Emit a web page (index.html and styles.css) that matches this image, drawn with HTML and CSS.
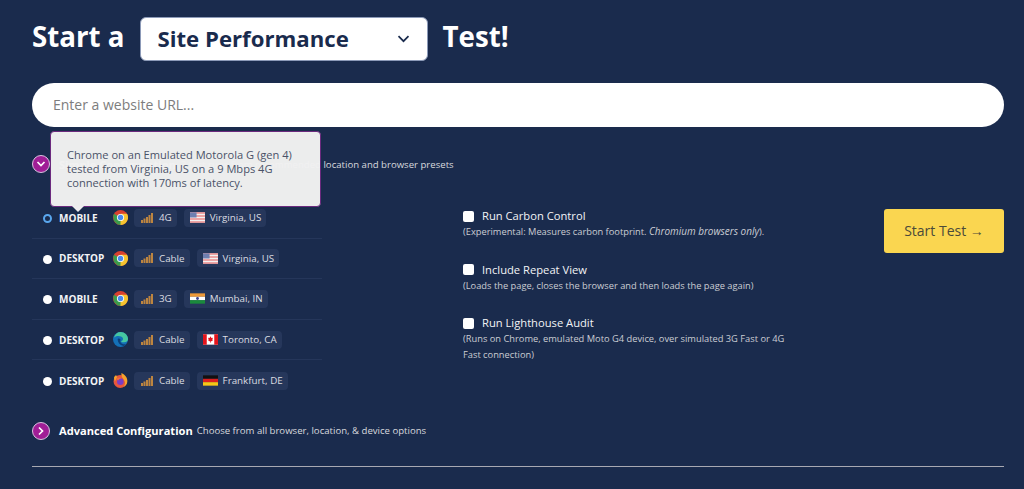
FILE: index.html
```html
<!DOCTYPE html>
<html lang="en">
<head>
<meta charset="utf-8">
<title>Start a Test</title>
<link rel="stylesheet" href="styles.css">
</head>
<body>
<svg class="defs" width="0" height="0" aria-hidden="true">
  <symbol id="bars" viewBox="0 0 12 10">
    <path d="M0 7h2v3H0zM2.500 5.500h2V10h-2zM5 4h2v6H5zM7.500 2h2v8h-2zM10 0h2v10h-2z" fill="#bd8540"/>
  </symbol>
  <symbol id="chrome" viewBox="0 0 16 16">
    <circle cx="8" cy="8" r="8" fill="#d9402f"/>
    <path d="M8 8 1.070 4 .3 6 1 11.500 4.500 15.200 8 16l3-4z" fill="#3b9c4b"/>
    <path d="M8 8v8a8 8 0 0 0 6.930-12H8z" fill="#f6c430"/>
    <circle cx="8" cy="8" r="3.800" fill="#fff"/>
    <circle cx="8" cy="8" r="2.900" fill="#4a8bee"/>
  </symbol>
  <symbol id="edge" viewBox="0 0 16 16">
    <circle cx="8" cy="8" r="8" fill="#1470b8"/>
    <path d="M1 6c1-4 4-6 7-6 4.500 0 8 3.500 8 7.500 0 2.500-2 3.500-4 3.500-1.500 0-3-.5-3.500-1 2-.5 2.500-2 2-3.500C9.500 4 3.500 3 1 6z" fill="#46c6a0"/>
    <path d="M5 8c0 3 2 6 6 7 1-.4 2-1 3-2-2 .5-5 0-6-2-.5-1 0-2 0-3-1-1.500-3-1.500-3 0z" fill="#0c3f78"/>
  </symbol>
  <symbol id="firefox" viewBox="0 0 16 16">
    <circle cx="7.600" cy="9" r="7" fill="#e8563c"/>
    <path d="M9 0c4 2 6.500 5 6.300 9-.2 3-2 5-4.300 6 2-2 2.500-5 1-7C11 6 8.500 4 9 0z" fill="#f6a32c"/>
    <path d="M1 5c.6-1.500 1.500-2.500 2.500-3 0 1 .5 1.700 1 2L2 9z" fill="#f6a32c"/>
    <circle cx="7.800" cy="9.200" r="3.500" fill="#7a3ec4"/>
    <path d="M3.500 6.500C5 5 7 4.800 9 5.500 7.500 6 6 6.500 5.500 8z" fill="#f2703a"/>
  </symbol>
  <symbol id="us" viewBox="0 0 16 11">
    <rect width="16" height="11" fill="#f3f0f0"/>
    <path d="M0 0h16v1.600H0zM0 3.100h16v1.600H0zM0 6.300h16v1.600H0zM0 9.400h16V11H0z" fill="#ea8a8c"/>
    <rect width="7" height="5.500" fill="#6f7fb0"/>
  </symbol>
  <symbol id="in" viewBox="0 0 16 11">
    <rect width="16" height="3.700" fill="#ef9a38"/>
    <rect y="3.700" width="16" height="3.700" fill="#fff"/>
    <rect y="7.300" width="16" height="3.700" fill="#1a8a3c"/>
    <circle cx="8" cy="5.500" r="1.500" fill="#3a3f8f"/>
  </symbol>
  <symbol id="ca" viewBox="0 0 16 11">
    <rect width="16" height="11" fill="#fff"/>
    <path d="M0 0h4v11H0zM12 0h4v11h-4z" fill="#e4141c"/>
    <path d="M8 2 9 4l1.500-.3L10 6l.6.6L8.300 7.500V9h-.6V7.500L5.400 6.600 6 6l-.5-2.300L7 4z" fill="#e4141c"/>
  </symbol>
  <symbol id="de" viewBox="0 0 16 11">
    <rect width="16" height="3.700" fill="#111"/>
    <rect y="3.700" width="16" height="3.700" fill="#dc1f1f"/>
    <rect y="7.300" width="16" height="3.700" fill="#f7c716"/>
  </symbol>
</svg>

<main class="page">
  <h1 class="title">
    <span>Start a</span>
    <span class="picker">Site Performance
      <svg class="caret" viewBox="0 0 12 8" width="13" height="8"><path d="M1 1.200 6 6.200l5-5" fill="none" stroke="#1a2b4d" stroke-width="1.700"/></svg>
    </span>
    <span>Test!</span>
  </h1>

  <div class="url">Enter a website URL...</div>

  <div class="config simple">
    <span class="toggle"><svg viewBox="0 0 10 10" width="10" height="10"><path d="M1.500 3 5 6.500 8.500 3" fill="none" stroke="#fff" stroke-width="1.700"/></svg></span>
    <strong>Simple Configuration</strong>
    <span class="hint">3 test runs from recommended location and browser presets</span>
  </div>

  <div class="tooltip">Chrome on an Emulated Motorola G (gen 4) tested from Virginia, US on a 9 Mbps 4G connection with 170ms of latency.</div>

  <div class="columns">
    <ul class="presets">
      <li class="preset">
        <span class="radio on"></span><span class="device">MOBILE</span>
        <svg class="browser"><use href="#chrome"/></svg>
        <span class="chip"><svg class="signal"><use href="#bars"/></svg>4G</span>
        <span class="chip"><svg class="flag"><use href="#us"/></svg>Virginia, US</span>
      </li>
      <li class="preset">
        <span class="radio"></span><span class="device">DESKTOP</span>
        <svg class="browser"><use href="#chrome"/></svg>
        <span class="chip"><svg class="signal"><use href="#bars"/></svg>Cable</span>
        <span class="chip"><svg class="flag"><use href="#us"/></svg>Virginia, US</span>
      </li>
      <li class="preset">
        <span class="radio"></span><span class="device">MOBILE</span>
        <svg class="browser"><use href="#chrome"/></svg>
        <span class="chip"><svg class="signal"><use href="#bars"/></svg>3G</span>
        <span class="chip"><svg class="flag"><use href="#in"/></svg>Mumbai, IN</span>
      </li>
      <li class="preset">
        <span class="radio"></span><span class="device">DESKTOP</span>
        <svg class="browser"><use href="#edge"/></svg>
        <span class="chip"><svg class="signal"><use href="#bars"/></svg>Cable</span>
        <span class="chip"><svg class="flag"><use href="#ca"/></svg>Toronto, CA</span>
      </li>
      <li class="preset">
        <span class="radio"></span><span class="device">DESKTOP</span>
        <svg class="browser"><use href="#firefox"/></svg>
        <span class="chip"><svg class="signal"><use href="#bars"/></svg>Cable</span>
        <span class="chip"><svg class="flag"><use href="#de"/></svg>Frankfurt, DE</span>
      </li>
    </ul>

    <div class="options">
      <div class="option">
        <div class="check"><span class="box"></span>Run Carbon Control</div>
        <p class="note">(Experimental: Measures carbon footprint. <em>Chromium browsers only</em>).</p>
      </div>
      <div class="option">
        <div class="check"><span class="box"></span>Include Repeat View</div>
        <p class="note">(Loads the page, closes the browser and then loads the page again)</p>
      </div>
      <div class="option">
        <div class="check"><span class="box"></span>Run Lighthouse Audit</div>
        <p class="note">(Runs on Chrome, emulated Moto G4 device, over simulated 3G Fast or 4G Fast connection)</p>
      </div>
    </div>

    <div class="start">Start Test <span class="arrow">→</span></div>
  </div>

  <div class="config advanced">
    <span class="toggle"><svg viewBox="0 0 10 10" width="10" height="10"><path d="M3 1.500 6.500 5 3 8.500" fill="none" stroke="#fff" stroke-width="1.700"/></svg></span>
    <strong>Advanced Configuration</strong>
    <span class="hint">Choose from all browser, location, &amp; device options</span>
  </div>

  <hr class="rule">
</main>
</body>
</html>
```
FILE: styles.css
```css
* { box-sizing: border-box; }
html, body { margin: 0; height: 100%; }
body {
  background: #1a2b4d;
  color: #fff;
  font-family: "Open Sans", "Liberation Sans", sans-serif;
  overflow: hidden;
}
.defs { position: absolute; }
.page { position: relative; padding: 17px 20px 0 32px; }

.title {
  display: flex;
  align-items: center;
  gap: 15px;
  margin: 0;
  font-size: 27.700px;
  font-weight: 700;
  height: 44px;
  line-height: 38px;
}
.title > span:first-child, .title > span:last-child { margin-top: -6px; }
.picker {
  display: flex;
  align-items: center;
  justify-content: space-between;
  width: 288px;
  height: 44px;
  padding: 0 17px;
  background: #fff;
  border: 1px solid #8c9ab8;
  border-radius: 6px;
  color: #1a2b4d;
  font-size: 22.200px;
  font-weight: 700;
}

.url {
  margin-top: 22px;
  height: 44px;
  line-height: 44px;
  padding-left: 21px;
  background: #fff;
  border-radius: 22px;
  color: #7d7d7d;
  font-size: 14px;
}

.config { display: flex; align-items: center; font-size: 9.600px; color: #d8d9dd; }
.config strong { color: #fff; font-size: 11.100px; margin: 0 4px 0 9px; }
.simple { margin-top: 28px; height: 18px; }
.simple .hint { margin-left: 1px; }
.advanced { margin-top: 21px; height: 18px; }
.toggle {
  display: flex;
  align-items: center;
  justify-content: center;
  width: 18px;
  height: 18px;
  border-radius: 50%;
  background: #a01e96;
  border: 1px solid #d9c2e0;
}

.tooltip {
  position: absolute;
  left: 50px;
  top: 131px;
  width: 271px;
  height: 76px;
  padding: 16px 16px 0;
  background: rgba(241, 241, 241, .98);
  border: 1px solid #6b2a7e;
  border-radius: 4px;
  color: #4a5268;
  font-size: 11.100px;
  line-height: 14px;
}
.tooltip::after {
  content: "";
  position: absolute;
  left: 21px;
  bottom: -6px;
  border: 6px solid transparent;
  border-bottom: 0;
  border-top-color: #eeeeef;
}

.columns { display: flex; align-items: flex-start; margin-top: 25px; }
.presets { list-style: none; margin: 0; padding: 0; width: 290px; flex: none; }
.preset {
  display: flex;
  align-items: center;
  height: 40.600px;
  border-bottom: 1px solid #25365a;
  font-size: 9.800px;
}
.preset:last-child { border-bottom: 0; }
.radio {
  flex: none;
  width: 9px;
  height: 9px;
  margin: 2px 0 0 11px;
  border-radius: 50%;
  background: #fff;
}
.radio.on { background: #1a2b4d; border: 2px solid #5aa7ee; }
.device {
  flex: none;
  width: 54px;
  margin-left: 7px;
  font-size: 10px;
  font-weight: 700;
  color: #f2f3f6;
}
.browser { flex: none; width: 15px; height: 15px; margin-right: 6px; }
.chip {
  display: flex;
  align-items: center;
  height: 18px;
  padding: 0 5px;
  margin-right: 7px;
  background: #26375b;
  border-radius: 4px;
  color: #dcdde2;
  white-space: nowrap;
}
.signal { flex: none; width: 12px; height: 10px; margin: 0 6px 0 2px; }
.flag { flex: none; width: 15px; height: 11px; margin: 0 5px 0 1px; }

.options { width: 334px; margin: 10px 0 0 141px; flex: none; }
.option { margin-bottom: 22px; }
.option:last-child { margin-bottom: 0; }
.check { display: flex; align-items: center; font-size: 11.200px; line-height: 16px; color: #f2f3f6; }
.box {
  flex: none;
  width: 11px;
  height: 11px;
  margin-right: 8px;
  background: #fff;
  border-radius: 2px;
}
.note { margin: 0; font-size: 9.300px; line-height: 15.500px; color: #cbcdd3; }
.note em { font-size: 1.070em; }

.start {
  flex: none;
  width: 120px;
  height: 44px;
  margin: 11px 0 0 87px;
  background: #fad650;
  border-radius: 3px;
  color: #4a4a3a;
  font-size: 14px;
  line-height: 44px;
  text-align: center;
}
.arrow { font-family: "Liberation Sans", sans-serif; }

.rule { margin: 26px 0 0; border: 0; height: 1px; background: #a8a9b2; }
```
